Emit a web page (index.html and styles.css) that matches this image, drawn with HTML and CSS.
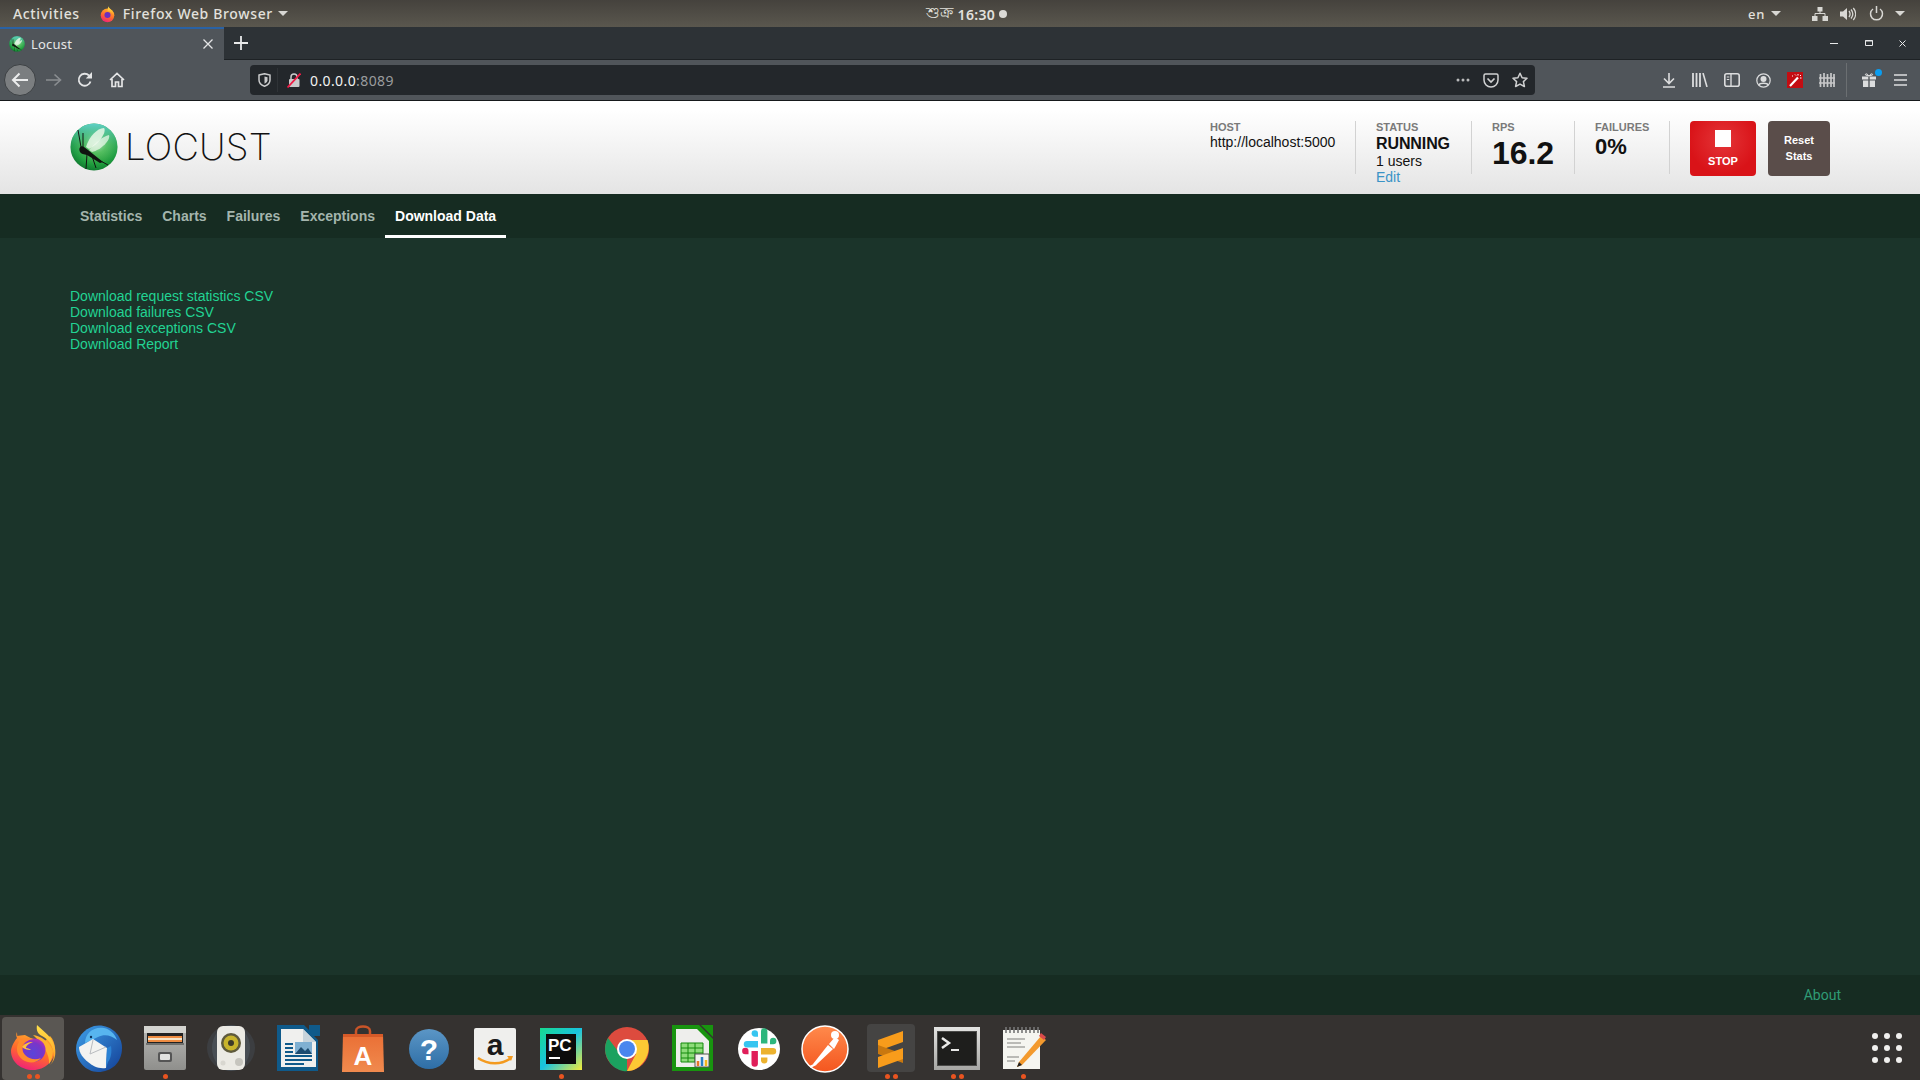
FILE: index.html
```html
<!DOCTYPE html>
<html lang="en">
<head>
<meta charset="utf-8">
<title>Locust</title>
<link rel="stylesheet" href="styles.css">
</head>
<body>
<svg class="defs" width="0" height="0">
  <defs>
    <radialGradient id="orb" cx="55%" cy="40%" r="65%"><stop offset="0" stop-color="#d8f2d4"/><stop offset=".35" stop-color="#5cc25a"/><stop offset=".75" stop-color="#1c9a3a"/><stop offset="1" stop-color="#0c6e2c"/></radialGradient>
    <linearGradient id="orbtop" x1="0" y1="0" x2="0" y2="1"><stop offset="0" stop-color="#5fd0c8"/><stop offset=".45" stop-color="#45b88c" stop-opacity=".3"/><stop offset="1" stop-color="#1c9a3a" stop-opacity="0"/></linearGradient>
    <linearGradient id="fx" x1="0.7" y1="0" x2="0.3" y2="1"><stop offset="0" stop-color="#ffb52a"/><stop offset=".55" stop-color="#ff6a2c"/><stop offset="1" stop-color="#f01f7a"/></linearGradient>
    <linearGradient id="fxflame" x1="0" y1="0" x2="0" y2="1"><stop offset="0" stop-color="#ffe14a"/><stop offset="1" stop-color="#ff9a1f"/></linearGradient>
    <radialGradient id="fxcore" cx="45%" cy="65%" r="65%"><stop offset="0" stop-color="#5a45d8"/><stop offset=".7" stop-color="#7a35c8"/><stop offset="1" stop-color="#b02fb8"/></radialGradient>
    <linearGradient id="pm" x1="0" y1="0" x2="0" y2="1"><stop offset="0" stop-color="#ff8a4c"/><stop offset="1" stop-color="#f4561f"/></linearGradient>
    <linearGradient id="bag" x1="0" y1="0" x2="0" y2="1"><stop offset="0" stop-color="#ea6f35"/><stop offset="1" stop-color="#f08a4e"/></linearGradient>
    <linearGradient id="help" x1="0" y1="0" x2="0" y2="1"><stop offset="0" stop-color="#5b96c6"/><stop offset="1" stop-color="#2e6ea6"/></linearGradient>
    <linearGradient id="cab" x1="0" y1="0" x2="0" y2="1"><stop offset="0" stop-color="#b9b9b6"/><stop offset="1" stop-color="#8f8f8c"/></linearGradient>
    <linearGradient id="pc" x1="0" y1="0" x2="1" y2="1"><stop offset="0" stop-color="#17d98f"/><stop offset=".5" stop-color="#19c3e0"/><stop offset="1" stop-color="#f4ec3a"/></linearGradient>
    <linearGradient id="tbird" x1="0" y1="0" x2="1" y2="1"><stop offset="0" stop-color="#3f9fe8"/><stop offset="1" stop-color="#123f96"/></linearGradient>
    <linearGradient id="termframe" x1="0" y1="0" x2="0" y2="1"><stop offset="0" stop-color="#e4e4e2"/><stop offset="1" stop-color="#a6a6a3"/></linearGradient>
    <symbol id="locust-mark" viewBox="0 0 48 48">
      <circle cx="24" cy="24" r="23.5" fill="url(#orb)"/>
      <circle cx="24" cy="24" r="23.5" fill="url(#orbtop)"/>
      <path d="M16 24 C19 14 27 5 34 5 C37 9 29 21 19 26Z" fill="#e9f7e6" opacity=".85"/>
      <path d="M19 27 C24 21 33 13 39 12 C41 17 31 27 22 29Z" fill="#f3fbf0" opacity=".7"/>
      <path d="M10 29 C8 25 11 22 14 24 L18 27 L33 39 L30 40 L17 32 C14 31 11 31 10 29Z" fill="#101410"/>
      <path d="M11 24 L8 7 M13 24 L13 10 M17 31 L16 46 M22 33 L26 45 M27 36 L38 42" stroke="#101410" stroke-width="1" fill="none"/>
    </symbol>
  </defs>
</svg>

<header class="gnome-bar">
  <div class="gnome-left">
    <span class="gnome-item">Activities</span>
    <span class="gnome-app">
      <svg class="gnome-fx" width="17" height="18" viewBox="0 0 50 50"><circle cx="25" cy="29" r="20" fill="url(#fx)"/><path d="M27 2 C30 10 43 14 45 30 C38 20 30 16 25 17Z" fill="url(#fxflame)"/><circle cx="25" cy="28" r="9" fill="#6a2fc0"/></svg>
      <span class="gnome-item">Firefox Web Browser</span>
      <i class="caret app-caret"></i>
    </span>
  </div>
  <div class="gnome-clock"><span class="bn">শুক্র</span> 16:30 <i class="clock-dot"></i></div>
  <div class="gnome-right">
    <span class="gnome-item lang">en</span><i class="caret lang-caret"></i>
    <svg class="tray net" width="16" height="14" viewBox="0 0 16 14"><path d="M5.500 0h5v4.500h-5zM0 9h5.500v5H0zM10.500 9H16v5h-5.500z" fill="#d8d7d3"/><path d="M8 4v3M3 9V6.500h10V9" stroke="#d8d7d3" fill="none"/></svg>
    <svg class="tray snd" width="16" height="14" viewBox="0 0 16 14"><path d="M0 4.500h3L7 1v12L3 9.500H0z" fill="#d8d7d3"/><path d="M9 4c1.300 1.800 1.300 4.200 0 6M11 2.500c2.200 2.700 2.200 6.300 0 9M13.300 1c3 3.600 3 8.400 0 12" stroke="#d8d7d3" stroke-width="1.300" fill="none"/></svg>
    <svg class="tray pwr" width="15" height="15" viewBox="0 0 15 15"><path d="M4 3a6 6 0 1 0 7 0M7.500 0v7" stroke="#d8d7d3" stroke-width="1.500" fill="none"/></svg>
    <i class="caret pwr-caret"></i>
  </div>
</header>

<div class="tabstrip">
  <div class="tab">
    <svg class="favicon" width="16" height="16"><use href="#locust-mark"/></svg>
    <span class="tab-title">Locust</span>
    <svg class="tab-close" width="10" height="10" viewBox="0 0 10 10"><path d="M.5.500l9 9M9.500.500l-9 9" stroke="#e4e5e6" stroke-width="1.300"/></svg>
  </div>
  <svg class="new-tab" width="14" height="14" viewBox="0 0 14 14"><path d="M7 0v14M0 7h14" stroke="#e8e9ea" stroke-width="1.800"/></svg>
  <div class="winctl">
    <svg width="8" height="8" viewBox="0 0 8 8"><path d="M0 4.500h8" stroke="#e8e9ea"/></svg>
    <svg width="8" height="6" viewBox="0 0 8 6"><path d="M.5.500h7v5h-7z" stroke="#e8e9ea" fill="none"/><path d="M0 1h8" stroke="#e8e9ea"/></svg>
    <svg width="7" height="7" viewBox="0 0 7 7"><path d="M.5.500l6 6M6.500.500l-6 6" stroke="#e8e9ea"/></svg>
  </div>
</div>

<div class="toolbar">
  <div class="back-btn">
    <svg width="18" height="16" viewBox="0 0 18 16"><path d="M17 8H2M8.500 1.500L2 8l6.500 6.500" stroke="#eceded" stroke-width="2" fill="none"/></svg>
  </div>
  <svg class="tb-ic fwd" width="16" height="14" viewBox="0 0 16 14"><path d="M0 7h14M8.500 1.500L14.500 7l-6 5.500" stroke="#8a8e91" stroke-width="1.600" fill="none"/></svg>
  <svg class="tb-ic reload" width="16" height="16" viewBox="0 0 16 16"><path d="M13.500 9.500A6 6 0 1 1 12 3.500" stroke="#e4e5e6" stroke-width="1.800" fill="none"/><path d="M15 0v6.500H8.800z" fill="#e4e5e6"/></svg>
  <svg class="tb-ic home" width="16" height="16" viewBox="0 0 16 16"><path d="M1 8L8 1.500 15 8M3 7v7.500h3.500V10h3v4.500H13V7" stroke="#e4e5e6" stroke-width="1.700" fill="none"/></svg>
  <div class="urlbar">
    <svg class="shield" width="13" height="14" viewBox="0 0 13 14"><path d="M1 2l5.500-1.300L12 2v5c0 3-2.500 5.200-5.500 6.300C3.500 12.200 1 10 1 7z" stroke="#c9cacb" stroke-width="1.500" fill="none"/><path d="M6.500 3.500l3 .7v3c0 1.500-1.300 2.700-3 3.500z" fill="#c9cacb"/></svg>
    <i class="url-sep"></i>
    <svg class="lock" width="14" height="15" viewBox="0 0 14 15"><path d="M4 6.500V4a3 3 0 0 1 6 0v2.500" stroke="#c9cacb" stroke-width="1.500" fill="none"/><rect x="2" y="6" width="10.500" height="8" rx="1" fill="#c9cacb"/><path d="M.5 14.500L13.500.500" stroke="#ee1c46" stroke-width="1.800"/></svg>
    <span class="url"><b>0.0.0.0</b>:8089</span>
    <span class="url-actions">
      <svg width="14" height="4" viewBox="0 0 14 4"><circle cx="2" cy="2" r="1.500" fill="#b9babb"/><circle cx="7" cy="2" r="1.500" fill="#b9babb"/><circle cx="12" cy="2" r="1.500" fill="#b9babb"/></svg>
      <svg width="16" height="15" viewBox="0 0 16 15"><path d="M1 2.500C1 1.500 1.700 1 2.500 1h11c.8 0 1.500.5 1.500 1.500V7a7 7 0 0 1-14 0z" stroke="#d0d1d2" stroke-width="1.500" fill="none"/><path d="M4.500 5.500L8 9l3.500-3.500" stroke="#d0d1d2" stroke-width="1.700" fill="none"/></svg>
      <svg width="16" height="16" viewBox="0 0 16 16"><path d="M8 1.200l2.100 4.500 4.900.6-3.600 3.300 1 4.900L8 12.100l-4.400 2.400 1-4.900L1 6.300l4.900-.6z" stroke="#d0d1d2" stroke-width="1.500" fill="none" stroke-linejoin="round"/></svg>
    </span>
  </div>
  <div class="tb-right">
    <svg width="14" height="15" viewBox="0 0 14 15"><path d="M7 0v10M2 5.500L7 10.500l5-5M1 14h12" stroke="#dcddde" stroke-width="1.600" fill="none"/></svg>
    <svg width="16" height="14" viewBox="0 0 16 14"><path d="M1 0v14M4.500 0v14M8 0v14" stroke="#dcddde" stroke-width="1.800"/><path d="M11 0l4 14" stroke="#dcddde" stroke-width="1.600"/></svg>
    <svg width="16" height="14" viewBox="0 0 16 14"><rect x=".8" y=".8" width="14.400" height="12.400" rx="2" stroke="#dcddde" stroke-width="1.600" fill="none"/><path d="M7 1v12" stroke="#dcddde" stroke-width="1.400"/><path d="M2.800 4h2.500M2.800 6.500h2.500" stroke="#dcddde"/></svg>
    <svg width="15" height="15" viewBox="0 0 15 15"><circle cx="7.500" cy="7.500" r="6.700" stroke="#dcddde" stroke-width="1.200" fill="none"/><circle cx="7.500" cy="6" r="3" fill="#dcddde"/><path d="M2.800 12c1-2.500 8.400-2.500 9.400 0" stroke="#dcddde" stroke-width="1.500" fill="none"/></svg>
    <svg width="16" height="16" viewBox="0 0 16 16"><rect width="16" height="16" fill="#c40d12"/><path d="M3 14L11 5.500" stroke="#fff" stroke-width="2.200"/><path d="M11 2v1.500M14 3l-1 1M14.500 6H13M8 2.500l1 1M5 4h1" stroke="#fff"/></svg>
    <svg width="16" height="14" viewBox="0 0 16 14"><path d="M1.500 1v13M5 0v14M8.500 1v13M12 0v14M15 1v13" stroke="#c7c8c9" stroke-width="1.700"/><path d="M0 5h16M0 10h16" stroke="#c7c8c9" stroke-width="1.300"/></svg>
  </div>
  <i class="tb-sep"></i>
  <div class="gift">
    <svg width="14" height="14" viewBox="0 0 14 14"><path d="M0 3.500h6.300v3H0zM7.700 3.500H14v3H7.700zM1 7.500h5.300V14H1zM7.700 7.500H13V14H7.700z" fill="#dcddde"/><path d="M7 3C5 0 3 .5 3.500 2L7 3c2-3 4-2.500 3.500-1L7 3z" stroke="#dcddde" fill="none"/></svg>
    <i class="gift-dot"></i>
  </div>
  <svg class="burger" width="13" height="12" viewBox="0 0 13 12"><path d="M0 1h13M0 6h13M0 11h13" stroke="#dcddde" stroke-width="1.700"/></svg>
</div>

<div class="page">
  <div class="locust-head">
    <div class="brand">
      <svg class="brand-mark" width="48" height="48"><use href="#locust-mark"/></svg>
      <span class="brand-name">LOCUST</span>
    </div>
    <div class="stats">
      <div class="stat stat-host">
        <div class="stat-label">HOST</div>
        <div class="stat-text">http://localhost:5000</div>
      </div>
      <div class="stat stat-status">
        <div class="stat-label">STATUS</div>
        <div class="stat-strong">RUNNING</div>
        <div class="stat-text">1 users</div>
        <a class="edit">Edit</a>
      </div>
      <div class="stat stat-rps">
        <div class="stat-label">RPS</div>
        <div class="stat-big">16.2</div>
      </div>
      <div class="stat stat-fail">
        <div class="stat-label">FAILURES</div>
        <div class="stat-mid">0%</div>
      </div>
    </div>
    <div class="btns">
      <div class="btn btn-stop"><i class="stop-square"></i><span>STOP</span></div>
      <div class="btn btn-reset"><span>Reset</span><span>Stats</span></div>
    </div>
  </div>

  <nav class="tabs">
    <a class="tablink">Statistics</a>
    <a class="tablink">Charts</a>
    <a class="tablink">Failures</a>
    <a class="tablink">Exceptions</a>
    <a class="tablink active">Download Data</a>
  </nav>

  <main class="content">
    <a class="dl">Download request statistics CSV</a>
    <a class="dl">Download failures CSV</a>
    <a class="dl">Download exceptions CSV</a>
    <a class="dl">Download Report</a>
  </main>

  <footer class="page-foot"><a class="about">About</a></footer>
</div>

<div class="dock">
  <div class="dock-app current">
    <svg width="50" height="50" viewBox="0 0 50 50">
      <path d="M9 9c-1 2-1 4 0 6C5 20 3 25 3 28c0 11 10 19 22 19s22-9 22-21c0-5-2-10-5-13l-8 8-17-9c-3 0-6 1-8 1z" fill="url(#fx)"/>
      <path d="M29 2c-1 6 1 9 5 11 6 3 10 8 11 15 2 7-1 12-3 14 5-4 6-11 5-17C45 14 36 9 29 2z" fill="url(#fxflame)"/>
      <path d="M25 12c7 1 17 6 20 16 0 5-2 10-4 13 1-10-7-21-16-29z" fill="#ffb02e"/>
      <circle cx="26" cy="27" r="11.500" fill="url(#fxcore)"/>
      <path d="M10 9c-1 4 0 6 3 8 3-2 8-3 13-1-7 1-12 4-12 8 0 9 10 15 19 11-4 5-12 6-18 2C9 33 7 25 11 19c-2-3-2-7-1-10z" fill="#ff8a2c"/>
      <path d="M14 24c2-3 6-5 11-5-5 2-7 4-7 6 2 0 4 1 5 2-4 0-7-1-9-3z" fill="#ffc13a"/>
    </svg>
    <span class="runs"><i></i><i></i></span>
  </div>
  <div class="dock-app">
    <svg width="50" height="50" viewBox="0 0 50 50">
      <path d="M20 3c14-3 28 7 28 22s-11 24-24 24C12 49 2 38 2 26 2 15 10 6 20 3z" fill="url(#tbird)"/>
      <path d="M11 20C11 10 20 3 30 5c6 1 11 6 13 12-6-5-13-6-19-3z" fill="#57b5ef"/>
      <circle cx="17" cy="14" r="1.200" fill="#10345e"/>
      <path d="M5 24l14-8 14 9-1 20c-8 1-13-2-18-6-5-4-9-9-9-15z" fill="#f3f3f1"/>
      <path d="M19 17l-3 14 16-7" stroke="#b9bcc0" fill="none"/>
      <path d="M33 25l4-2c1 6 0 12-3 16l-2 6z" fill="#2b82d4"/>
    </svg>
  </div>
  <div class="dock-app">
    <svg width="50" height="50" viewBox="0 0 50 50"><rect x="4" y="3" width="42" height="44" rx="2" fill="url(#cab)"/><rect x="4" y="3" width="42" height="7" fill="#d4d4d0"/><rect x="7" y="10" width="36" height="11" fill="#222"/><path d="M8 13h34v6H8z" fill="#ee8c42"/><path d="M8 15h34v2H8z" fill="#f5e4c8"/><rect x="6" y="20" width="38" height="2" fill="#6f6f6c"/><rect x="18" y="29" width="14" height="10" rx="2" fill="#555"/><rect x="20" y="31" width="10" height="6" rx="1" fill="#e2e2e0"/></svg>
    <span class="runs"><i></i></span>
  </div>
  <div class="dock-app">
    <svg width="50" height="50" viewBox="0 0 50 50"><ellipse cx="25" cy="25" rx="24" ry="23" fill="#4a5560" opacity=".35"/><ellipse cx="25" cy="25" rx="19" ry="23" fill="#5a6670" opacity=".4"/><rect x="11" y="3" width="28" height="44" rx="6" fill="#ebeae4"/><circle cx="25" cy="20" r="10" fill="#5e5a3c"/><circle cx="25" cy="20" r="7.500" fill="#c8b42c"/><circle cx="25" cy="20" r="3" fill="#3c3a2a"/><circle cx="33" cy="39" r="4" fill="#c6c5be"/><circle cx="17" cy="40" r="2.500" fill="#d8d7d0"/></svg>
  </div>
  <div class="dock-app">
    <svg width="50" height="50" viewBox="0 0 50 50"><path d="M5 2h27l5 5V2h11v11h-6l4 4v31H5z" fill="#0f5a8a"/><path d="M9 6h22l13 13v25H9z" fill="#f0f0ee"/><path d="M31 6l13 13H31z" fill="#c7d4dc"/><path d="M13 21h8M13 25h8M13 29h8M13 33h27M13 37h27M13 41h19" stroke="#0f5a8a" stroke-width="2"/><rect x="23" y="19" width="17" height="12" fill="#7fb0d2"/><path d="M23 31l6-7 4 4 3-3 4 6z" fill="#1d4c70"/></svg>
  </div>
  <div class="dock-app">
    <svg width="50" height="50" viewBox="0 0 50 50"><path d="M18 13V8c0-6 14-6 14 0v5" stroke="#c95428" stroke-width="2.500" fill="none"/><path d="M5 11h40l1 38H4z" fill="url(#bag)"/><path d="M5 11h40v3H5z" fill="#d65a28"/><text class="ic-a" x="25" y="42" text-anchor="middle">A</text></svg>
  </div>
  <div class="dock-app">
    <svg width="50" height="50" viewBox="0 0 50 50"><circle cx="25" cy="26" r="20" fill="url(#help)"/><text class="ic-q" x="25" y="37" text-anchor="middle">?</text></svg>
  </div>
  <div class="dock-app">
    <svg width="50" height="50" viewBox="0 0 50 50"><rect x="4" y="5" width="42" height="42" rx="2" fill="#efefed"/><text class="ic-amz" x="25" y="32" text-anchor="middle">a</text><path d="M8 35c10 7 24 7 33 0" stroke="#f39a1f" stroke-width="2.500" fill="none"/><path d="M37 33l6 0-2 5z" fill="#f39a1f"/></svg>
  </div>
  <div class="dock-app">
    <svg width="50" height="50" viewBox="0 0 50 50"><rect x="4" y="5" width="42" height="42" fill="url(#pc)"/><rect x="10" y="11" width="30" height="30" fill="#0c0c0c"/><text class="ic-pc" x="12" y="28">PC</text><rect x="13" y="34" width="11" height="2" fill="#fff"/></svg>
    <span class="runs"><i></i></span>
  </div>
  <div class="dock-app">
    <svg width="50" height="50" viewBox="0 0 50 50"><circle cx="25" cy="26" r="22" fill="#dd4b3e"/><path d="M25 26L6.500 37.500C12 48 25 49 25 48z" fill="#1ba260"/><path d="M6 15C1 24 3 33 7 38l11-7z" fill="#1ba260"/><path d="M25 17h20.500C48 24 47 34 39 42 34 47 29 48 25 48l9-17z" fill="#fcc934"/><circle cx="25" cy="26" r="10" fill="#fff"/><circle cx="25" cy="26" r="8" fill="#4a86ee"/></svg>
  </div>
  <div class="dock-app">
    <svg width="50" height="50" viewBox="0 0 50 50"><path d="M4 2h27l14 14v32H4z" fill="#18940f"/><path d="M8 6h21l12 12v26H8z" fill="#eeeeec"/><path d="M33 2h12v12z" fill="#18940f"/><rect x="13" y="20" width="22" height="19" fill="#8edc7a"/><path d="M13 20h22v19H13zM13 25h22M13 30h22M13 35h22M20 20v19M27 20v19" stroke="#128a0a" fill="none"/><rect x="27" y="31" width="14" height="13" fill="#f4f4f2" stroke="#555"/><path d="M30 43v-5" stroke="#e8762b" stroke-width="2.500"/><path d="M34 43v-9" stroke="#2c7fc4" stroke-width="2.500"/><path d="M38 43v-6" stroke="#f2b61c" stroke-width="2.500"/></svg>
  </div>
  <div class="dock-app">
    <svg width="50" height="50" viewBox="0 0 50 50"><circle cx="25" cy="26" r="21" fill="#fff"/><path d="M24 18h-11a3.200 3.200 0 0 0 0 6.400h11z" fill="#36c5f0"/><path d="M24 10.500a3.200 3.200 0 0 0-6.400 0c0 1.800 1.400 3.200 3.200 3.200H24z" fill="#36c5f0"/><path d="M27 8.500a3.200 3.200 0 0 1 6.400 0v12h-6.400z" fill="#2eb67d"/><path d="M36 18a3.200 3.200 0 1 1 3.200 3.200H36z" fill="#2eb67d"/><path d="M27 25h12a3.200 3.200 0 0 1 0 6.400H27z" fill="#ecb22e"/><path d="M27 34.500h6.400v2.800a3.200 3.200 0 0 1-6.400 0z" fill="#ecb22e"/><path d="M17.500 28h6.400v12.500a3.200 3.200 0 0 1-6.400 0z" fill="#e01e5a"/><path d="M14.500 28v3.200h-3.200a3.200 3.200 0 1 1 3.200-3.200z" fill="#e01e5a"/></svg>
  </div>
  <div class="dock-app">
    <svg width="50" height="50" viewBox="0 0 50 50"><circle cx="25" cy="26" r="23" fill="url(#pm)" stroke="#fff" stroke-width="1.500"/><path d="M13 41l15-19 5 4-17 16z" fill="#fff"/><circle cx="35" cy="12" r="4" fill="#fff"/><path d="M29 21l6-7 4 3-5 9z" fill="#fff"/><path d="M10 44l6-3" stroke="#fff" stroke-width="2"/></svg>
  </div>
  <div class="dock-app">
    <i class="sublime-tile"></i>
    <svg width="50" height="50" viewBox="0 0 50 50"><path d="M12 17l25-9v11L12 28z" fill="#f89c1b"/><path d="M12 22l25 9v9l-25-9z" fill="#c9780f"/><path d="M12 34l25-9v11L12 45z" fill="#f89c1b"/></svg>
    <span class="runs"><i></i><i></i></span>
  </div>
  <div class="dock-app">
    <svg width="50" height="50" viewBox="0 0 50 50"><rect x="2" y="4" width="46" height="43" fill="url(#termframe)"/><rect x="5" y="8" width="40" height="35" fill="#4a4a48"/><rect x="6" y="9" width="38" height="33" fill="#1e1e1c"/><path d="M10 15l7 5-7 5" stroke="#e8e8e6" stroke-width="2.500" fill="none"/><path d="M19 27h8" stroke="#e8e8e6" stroke-width="2"/></svg>
    <span class="runs"><i></i><i></i></span>
  </div>
  <div class="dock-app">
    <svg width="50" height="50" viewBox="0 0 50 50"><rect x="5" y="7" width="37" height="39" fill="#f5f5f0"/><path d="M8 4v6M12 4v6M16 4v6M20 4v6M24 4v6M28 4v6M32 4v6M36 4v6M40 4v6" stroke="#777" stroke-width="1.600"/><path d="M9 16h18M9 20h14M9 24h18M9 34h12M9 38h8" stroke="#a6a6a2" stroke-width="1.300"/><path d="M21 39l22-26 5 4-24 25-5 2z" fill="#f39a2e"/><path d="M43 10l5 4-2 3-5-4z" fill="#d94b4b"/><path d="M19 44l2-5 3 3z" fill="#222"/></svg>
    <span class="runs"><i></i></span>
  </div>
  <div class="dock-grid">
    <i></i><i></i><i></i><i></i><i></i><i></i><i></i><i></i><i></i>
  </div>
</div>
</body>
</html>
```

FILE: styles.css
```css
* { box-sizing: border-box; }
html, body { margin: 0; height: 100%; }
body {
  width: 1920px;
  height: 1080px;
  overflow: hidden;
  display: flex;
  flex-direction: column;
  font-family: "Liberation Sans", Arial, sans-serif;
  background: #1b342a;
}
.defs { position: absolute; }
i { display: block; font-style: normal; }
a { display: block; }

/* GNOME top bar */
.gnome-bar {
  height: 27px;
  flex: none;
  display: flex;
  align-items: center;
  position: relative;
  padding: 0 15px 0 13px;
  background: linear-gradient(#45423d, #5a574e);
  color: #e2e1dd;
  font: 500 14px "Noto Sans", "DejaVu Sans", sans-serif;
}
.gnome-left { display: flex; align-items: center; gap: 19px; }
.gnome-app { display: flex; align-items: center; gap: 7px; }
.gnome-item { letter-spacing: .65px; }
.caret {
  width: 0; height: 0;
  border-left: 5px solid transparent;
  border-right: 5px solid transparent;
  border-top: 5px solid #d8d7d3;
}
.app-caret { margin-left: -2px; }
.gnome-clock {
  position: absolute;
  left: 926px;
  top: 1px;
  display: flex;
  align-items: center;
  gap: 3px;
  font-weight: 600;
  font-size: 14px;
  letter-spacing: .3px;
}
.bn { font-size: 15.500px; font-weight: 500; margin-right: 1px; }
.clock-dot { width: 8px; height: 8px; border-radius: 50%; background: #dcdbd7; margin-left: 1px; }
.gnome-right { margin-left: auto; display: flex; align-items: center; }
.lang { font-size: 13px; }
.lang-caret { margin-left: 6px; }
.net { margin-left: 31px; }
.snd { margin-left: 12px; }
.pwr { margin-left: 13px; }
.pwr-caret { margin-left: 11px; }

/* Firefox tab strip */
.tabstrip {
  height: 33px;
  flex: none;
  display: flex;
  align-items: center;
  background: #2d3236;
  border-bottom: 1px solid #1e2225;
}
.tab {
  width: 224px;
  height: 33px;
  background: #50555a;
  border-top: 2px solid #2a62a4;
  display: flex;
  align-items: center;
  padding: 0 11px 0 9px;
  color: #e6e7e8;
  font: 13px "Noto Sans", "DejaVu Sans", sans-serif;
}
.favicon { flex: none; }
.tab-title { margin-left: 6px; letter-spacing: .2px; }
.tab-close { margin-left: auto; }
.new-tab { margin-left: 10px; }
.winctl {
  margin-left: auto;
  width: 104px;
  display: flex;
  align-items: center;
  justify-content: space-between;
  padding: 0 14px;
}

/* Firefox toolbar */
.toolbar {
  height: 41px;
  flex: none;
  display: flex;
  align-items: center;
  background: #50555a;
  border-bottom: 1px solid #16191b;
  padding-left: 4px;
  color: #e6e7e8;
}
.back-btn {
  width: 32px; height: 32px;
  flex: none;
  border-radius: 50%;
  background: #7b7e80;
  border: 1px solid #3d4144;
  display: flex; align-items: center; justify-content: center;
}
.fwd { margin-left: 10px; }
.reload { margin-left: 15px; }
.home { margin-left: 16px; }
.urlbar {
  margin-left: 125px;
  width: 1285px;
  height: 30px;
  background: #23272b;
  border-radius: 4px;
  display: flex;
  align-items: center;
  padding-left: 8px;
  flex: none;
}
.url-sep { width: 1px; height: 24px; background: #2f3337; margin-left: 6px; }
.lock { margin-left: 9px; }
.url {
  margin-left: 9px;
  font: 14px "Noto Sans", "DejaVu Sans", sans-serif;
  color: #9a9c9e;
  letter-spacing: .4px;
}
.url b { font-weight: 400; color: #f2f2f2; }
.url-actions { margin-left: auto; display: flex; align-items: center; gap: 13px; padding-right: 7px; }
.tb-right {
  margin-left: 127px;
  display: flex;
  align-items: center;
  gap: 16px;
}
.tb-sep { width: 1px; height: 34px; background: #6b6f72; margin-left: 11px; }
.gift { position: relative; margin-left: 15px; height: 14px; }
.gift svg { display: block; }
.gift-dot { position: absolute; right: -6px; top: -4px; width: 7px; height: 7px; border-radius: 50%; background: #0a9df0; }
.burger { margin-left: 18px; }

/* Locust page */
.page { flex: 1; min-height: 0; display: flex; flex-direction: column; }
.locust-head {
  height: 93px;
  flex: none;
  background: linear-gradient(#fff 10%, #e4e4e4);
  display: flex;
  padding: 20px 90px 0 70px;
  align-items: flex-start;
}
.brand { display: flex; align-items: center; gap: 7px; margin-top: 2px; }
.brand-mark { flex: none; }
.brand-name {
  font: 200 36.500px Inter, "Noto Sans", sans-serif;
  letter-spacing: .2px;
  color: #111;
  line-height: 48px;
}
.stats { margin-left: auto; display: flex; align-items: flex-start; }
.stat {
  height: 53px;
  padding-right: 20px;
  border-right: 1px solid #d2d2d2;
  margin-right: 20px;
  color: #111;
  font-size: 14px;
}
.stat-label { font-size: 11px; font-weight: 700; color: #7a7a7a; line-height: 13px; }
.stat-text { font-size: 14px; line-height: 16px; }
.stat-host { width: 146px; }
.stat-status { width: 96px; }
.stat-rps { width: 83px; }
.stat-fail { width: 75px; }
.stat-strong { font-size: 16px; font-weight: 700; line-height: 19px; letter-spacing: -.1px; }
.stat-big { font-size: 32px; font-weight: 700; line-height: 37px; letter-spacing: -.1px; margin-top: 1px; }
.stat-mid { font-size: 22px; font-weight: 700; line-height: 26px; }
.edit { font-size: 14px; line-height: 16px; color: #3a93c6; }
.btns { display: flex; gap: 12px; }
.btn {
  height: 55px;
  border-radius: 4px;
  display: flex;
  flex-direction: column;
  align-items: center;
  color: #fff;
  font-size: 11px;
  font-weight: 700;
}
.btn-stop { width: 66px; background: radial-gradient(circle at 50% 35%, #e43538, #d91318 70%); padding-top: 9px; }
.stop-square { width: 16px; height: 17px; background: #fff; margin-bottom: 8px; }
.btn-reset { width: 62px; background: #5a4d4a; padding-top: 13px; gap: 3px; line-height: 13px; justify-content: flex-start; }

.tabs {
  height: 44px;
  flex: none;
  background: #162c22;
  display: flex;
  padding-left: 70px;
}
.tablink {
  padding: 14px 10px 0;
  font-size: 14px;
  font-weight: 700;
  line-height: 16px;
  color: #a4b5ad;
  border-bottom: 3px solid transparent;
}
.tablink.active { color: #fff; border-bottom-color: #fff; margin-left: 0; }
.content {
  flex: 1;
  background: #1b342a;
  padding: 50px 70px 0;
}
.dl { font-size: 14px; line-height: 16px; color: #22d393; }
.page-foot {
  height: 40px;
  flex: none;
  background: #162c22;
  display: flex;
  align-items: center;
  justify-content: flex-end;
  padding-right: 79px;
}
.about { font: 14px Roboto, "Liberation Sans", sans-serif; color: #2f9c76; }

/* Ubuntu dock */
.dock {
  height: 65px;
  flex: none;
  background: #353230;
  display: flex;
  align-items: center;
  position: relative;
}
.dock-app {
  width: 66px;
  height: 65px;
  flex: none;
  position: relative;
  display: flex;
  align-items: center;
  justify-content: center;
}
.dock-app svg { position: relative; display: block; }
.dock-app.current::before {
  content: "";
  position: absolute;
  left: 2px; top: 2px; right: 2px; bottom: 0;
  background: #5a5753;
  border-radius: 4px;
}
.sublime-tile {
  position: absolute;
  left: 9px; top: 9px;
  width: 48px; height: 48px;
  border-radius: 4px;
  background: #454443;
}
.runs {
  position: absolute;
  left: 0; right: 0; bottom: 1px;
  display: flex;
  justify-content: center;
  gap: 3px;
}
.runs i { width: 5px; height: 5px; border-radius: 50%; background: #e95420; }
.dock-grid {
  margin-left: auto;
  margin-right: 18px;
  width: 30px;
  display: grid;
  grid-template-columns: repeat(3, 6px);
  gap: 6px;
}
.dock-grid i { width: 6px; height: 6px; border-radius: 50%; background: #f1f0ee; }
.ic-a { font: 700 26px "Liberation Sans", sans-serif; fill: #fff; }
.ic-q { font: 700 30px "Liberation Sans", sans-serif; fill: #fff; }
.ic-amz { font: 700 30px "Liberation Sans", sans-serif; fill: #1a1a1a; }
.ic-pc { font: 700 17px "Liberation Sans", sans-serif; fill: #fff; }
```
